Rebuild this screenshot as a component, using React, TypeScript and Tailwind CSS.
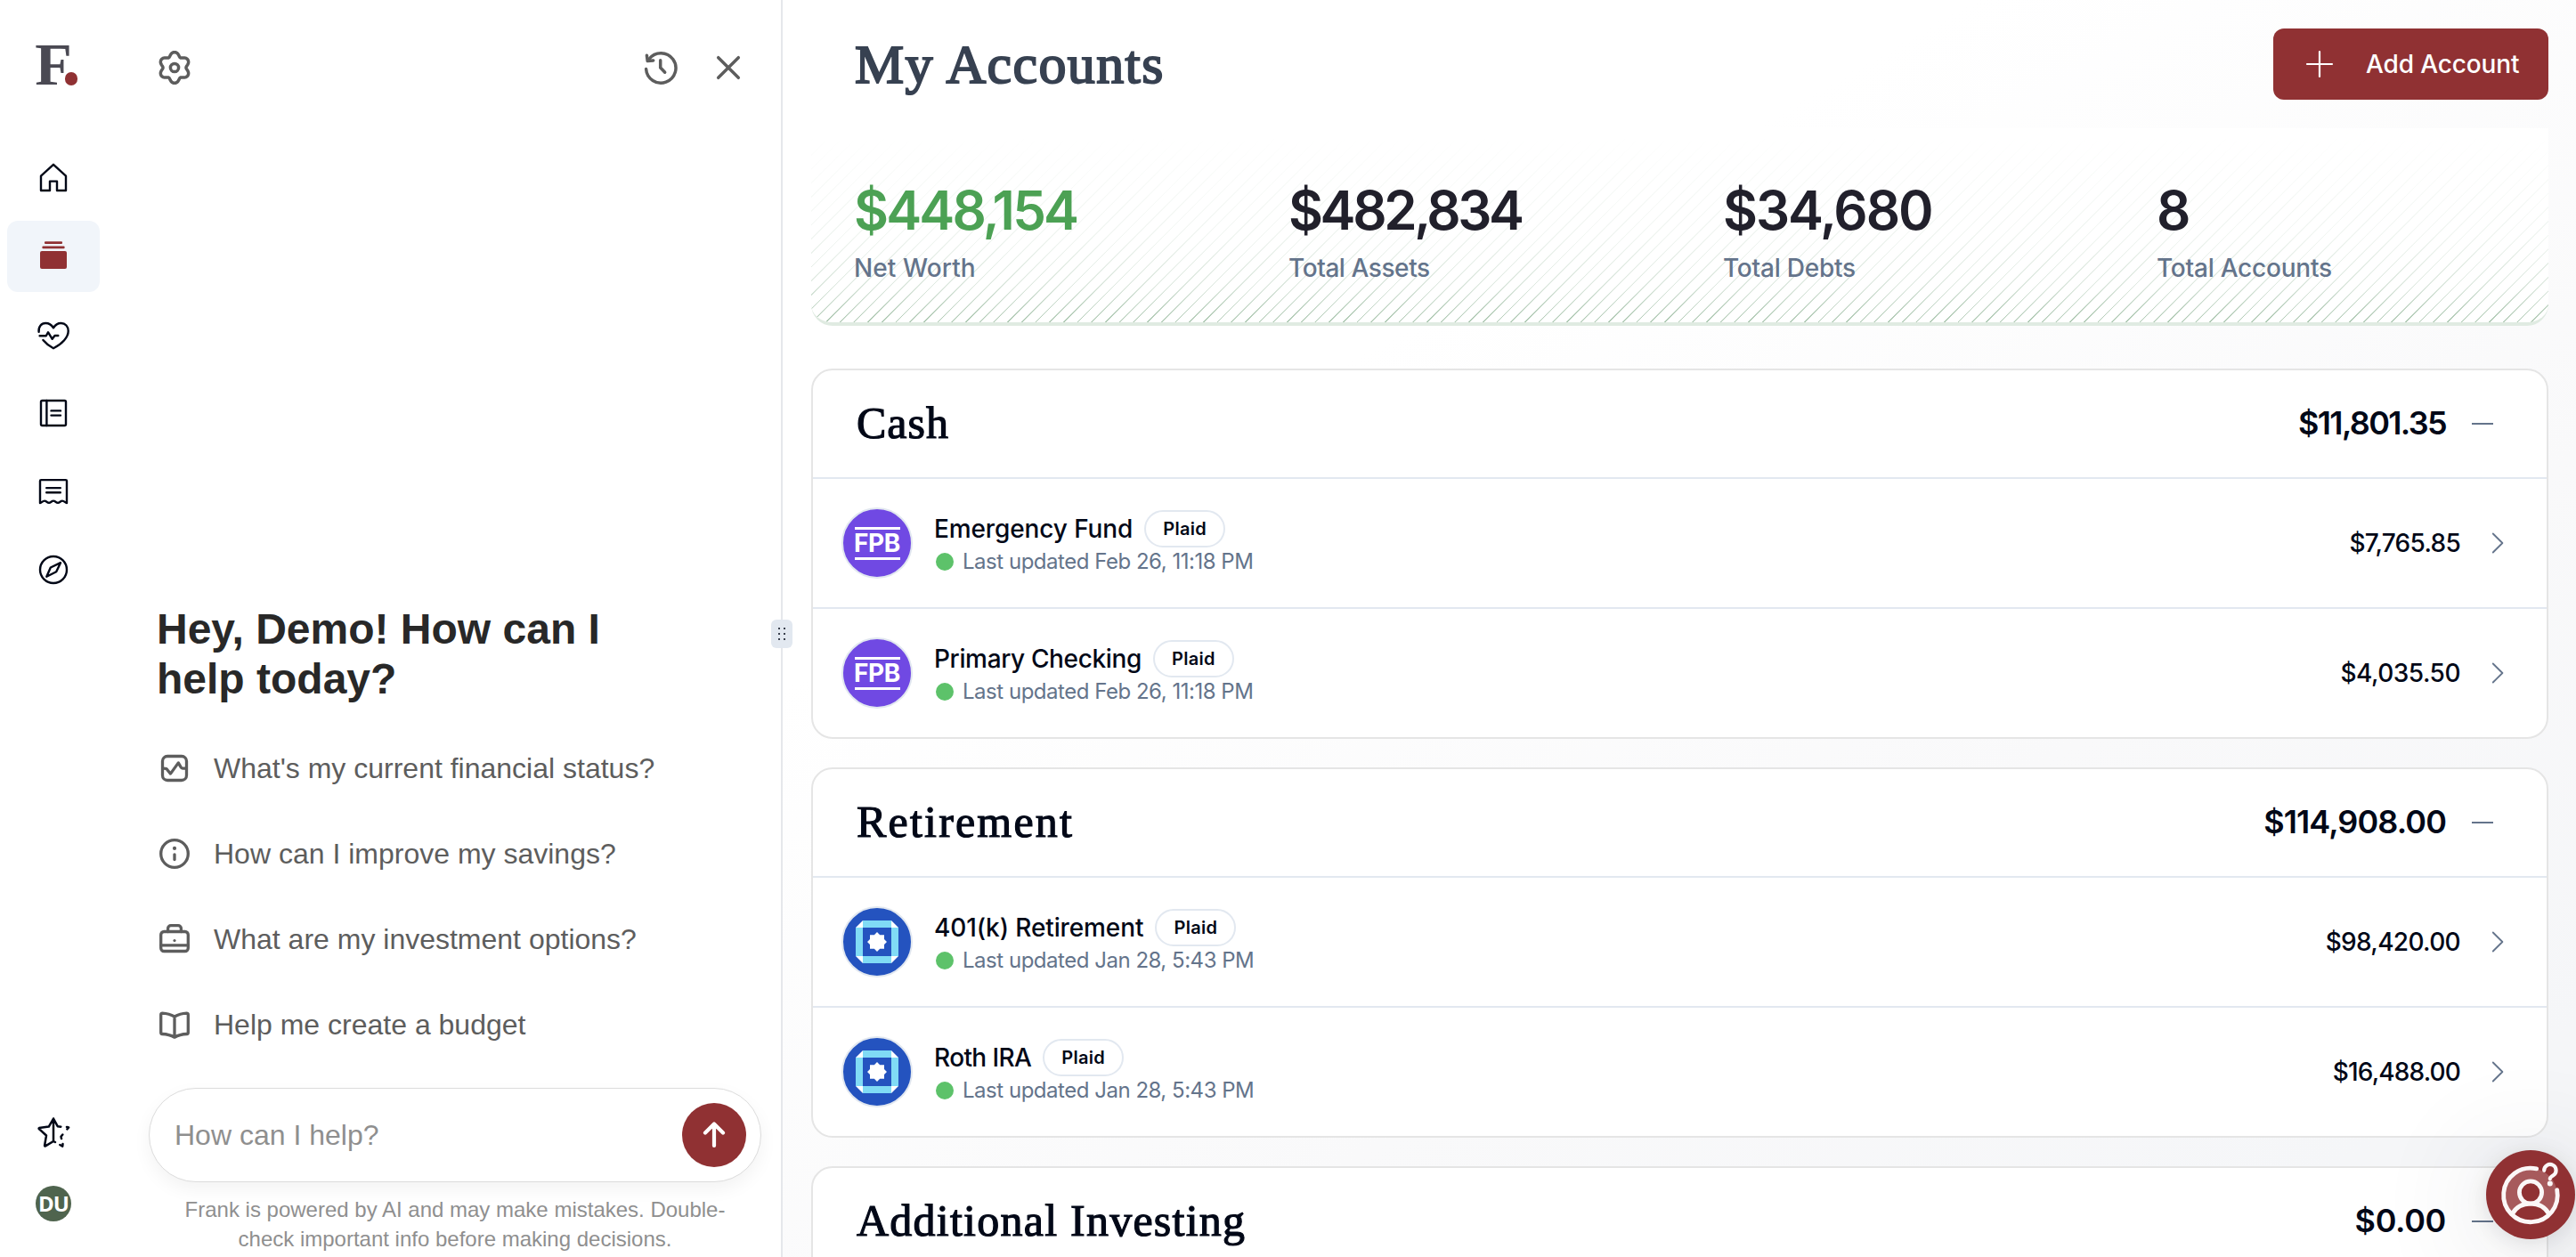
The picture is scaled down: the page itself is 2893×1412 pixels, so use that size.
import type { ReactNode } from 'react';
import clsx from 'clsx';

const stats = [
  { label: 'Net Worth', value: '$448,154', valueClass: 'text-[#4ca154] tracking-[-2.85px]', labelClass: 'tracking-[0.1px]' },
  { label: 'Total Assets', value: '$482,834', valueClass: 'text-[#21202b] tracking-[-3.4px]', labelClass: 'tracking-[-0.43px]' },
  { label: 'Total Debts', value: '$34,680', valueClass: 'text-[#21202b] tracking-[-2.06px]', labelClass: 'tracking-[-0.23px]' },
  { label: 'Total Accounts', value: '8', valueClass: 'text-[#21202b]', labelClass: 'tracking-[-0.23px]' },
];

const groups = [
  {
    title: 'Cash',
    titleClass: 'tracking-[1px]',
    total: '$11,801.35',
    totalClass: 'tracking-[-1.66px]',
    accounts: [
      { name: 'Emergency Fund', nameClass: 'tracking-[-0.12px]', bank: 'fpb', updated: 'Feb 26, 11:18 PM', amount: '$7,765.85', amountClass: 'tracking-[-0.72px]' },
      { name: 'Primary Checking', nameClass: 'tracking-[-0.36px]', bank: 'fpb', updated: 'Feb 26, 11:18 PM', amount: '$4,035.50', amountClass: 'tracking-[-0.49px]' },
    ],
  },
  {
    title: 'Retirement',
    titleClass: 'tracking-[2.2px]',
    total: '$114,908.00',
    totalClass: 'tracking-[-0.9px]',
    accounts: [
      { name: '401(k) Retirement', nameClass: 'tracking-[-0.11px]', bank: 'square', updated: 'Jan 28, 5:43 PM', amount: '$98,420.00', amountClass: 'tracking-[-0.67px]' },
      { name: 'Roth IRA', nameClass: 'tracking-[-0.62px]', bank: 'square', updated: 'Jan 28, 5:43 PM', amount: '$16,488.00', amountClass: 'tracking-[-0.86px]' },
    ],
  },
  {
    title: 'Additional Investing',
    titleClass: 'tracking-[1.24px]',
    total: '$0.00',
    totalClass: 'tracking-[-0.35px]',
    accounts: [],
  },
];

// Six-lobed gear outline
const gearPath =
  Array.from({ length: 120 }, (_, i) => {
    const a = (i / 120) * Math.PI * 2;
    const r = 15.4 + 2.2 * Math.cos(6 * a) - 0.25 * Math.cos(12 * a);
    return `${i ? 'L' : 'M'}${(20 + r * Math.sin(a)).toFixed(2)} ${(20 - r * Math.cos(a)).toFixed(2)}`;
  }).join('') + 'Z';

function Icon({ children, width = 2.4 }: { children: ReactNode; width?: number }) {
  return (
    <svg
      viewBox="0 0 40 40"
      className="size-10 shrink-0"
      fill="none"
      stroke="currentColor"
      strokeWidth={width}
      strokeLinecap="round"
      strokeLinejoin="round"
    >
      {children}
    </svg>
  );
}

const navItems = [
  {
    id: 'home',
    icon: <path d="M20 4.8L6 17.6V34h10V23.6h8V34h10V17.6z" />,
  },
  {
    id: 'accounts',
    active: true,
    icon: (
      <g fill="currentColor" stroke="none">
        <rect x="10" y="3.3" width="20" height="2.6" rx="1" />
        <rect x="7.4" y="8.6" width="25.2" height="2.6" rx="1" />
        <rect x="5" y="14" width="30" height="20" rx="2" />
      </g>
    ),
  },
  {
    id: 'health',
    icon: (
      <>
        <path d="M3.6 16.8C3 11 6.4 7 11.2 7c3.8 0 6.8 2 8.8 5.3C22 9 25 7 28.5 7c4.9 0 8.2 3.8 8.2 8.8 0 7-6.7 14.4-16.7 19.4-4.5-2.3-8.5-5.4-11.6-9.2" />
        <path d="M4.6 21.3h7.2L14 17.2l4.7 7.6 2.8-3.8h3.8" />
      </>
    ),
  },
  {
    id: 'journal',
    icon: (
      <>
        <rect x="6" y="6" width="28" height="28" rx="1.5" />
        <path d="M12.4 6v28M17.5 17.4H28M17.5 22.6H28" />
      </>
    ),
  },
  {
    id: 'transactions',
    icon: (
      <>
        <path d="M5 33V8.3a1.2 1.2 0 0 1 1.2-1.2h27.6A1.2 1.2 0 0 1 35 8.3V33c-1.8-.2-2.8-2.4-5-2.4s-2.8 2.2-5 2.2-2.8-2.2-5-2.2-2.8 2.2-5 2.2-2.8-2.2-5-2.2S6.8 32.8 5 33z" />
        <path d="M12.2 16.1h15.6M12.2 21.2h15.6" />
      </>
    ),
  },
  {
    id: 'explore',
    icon: (
      <>
        <circle cx="20" cy="20" r="15" />
        <path d="M28 12.2l-4.8 10.1-10.9 5.5 4.5-10.3z" />
      </>
    ),
  },
];

const suggestions = [
  {
    text: "What's my current financial status?",
    icon: (
      <>
        <rect x="6.5" y="6.5" width="27" height="27" rx="5.5" />
        <path d="M7.5 20.2c3.5 0 3.6.1 5 2.3l3 3.6 8.8-12.2 2.6 4.4c1.2 1.9 1.6 1.9 5.6 1.9" />
      </>
    ),
  },
  {
    text: 'How can I improve my savings?',
    icon: (
      <>
        <circle cx="20" cy="20" r="15.3" />
        <path d="M20 20.8v5.8" />
        <circle cx="20" cy="13.9" r="2.1" fill="currentColor" stroke="none" />
      </>
    ),
  },
  {
    text: 'What are my investment options?',
    icon: (
      <>
        <rect x="4.7" y="11.5" width="30.6" height="22" rx="3.5" />
        <path d="M4.7 26.8h30.6M12.6 11.5V8a3.3 3.3 0 0 1 3.3-3.3h8.2A3.3 3.3 0 0 1 27.4 8v3.5" />
        <circle cx="20" cy="21.5" r="1.6" fill="currentColor" stroke="none" />
      </>
    ),
  },
  {
    text: 'Help me create a budget',
    icon: (
      <path d="M20 11c-4.2-2.5-8.7-3.7-13.6-3.9A1.6 1.6 0 0 0 4.7 8.7v20.2c0 .9.7 1.5 1.6 1.6 5.2.2 9.7 1.4 13.7 3.7 4-2.3 8.5-3.5 13.7-3.7.9-.1 1.6-.7 1.6-1.6V8.7a1.6 1.6 0 0 0-1.7-1.6C28.7 7.3 24.2 8.5 20 11zv23" />
    ),
  },
];

function NavRail() {
  return (
    <aside className="flex w-[120px] shrink-0 flex-col items-center pb-10">
      <div className="relative flex h-[160px] w-20 justify-center pt-[34px]">
        <span className="font-['Liberation_Serif',serif] text-[68px] leading-[76px] font-bold text-[#4a4953]">F</span>
        <span className="absolute top-[81px] left-[53px] h-[15px] w-[14px] rounded-full bg-[#903133]" />
      </div>
      <nav className="flex flex-col gap-2">
        {navItems.map((item) => (
          <a
            key={item.id}
            className={clsx(
              'flex h-20 w-[104px] items-center justify-center rounded-xl',
              item.active ? 'bg-[#f1f5fa] text-[#903133]' : 'text-[#020817]'
            )}
          >
            <Icon>{item.icon}</Icon>
          </a>
        ))}
      </nav>
      <div className="mt-auto flex flex-col items-center gap-10">
        <span className="text-[#020817]">
          <Icon width={2.5}>
            <path d="M20 30V4.5l-5.2 9.1-10.9 1.5c-.4.1-.4.6-.1.9l8.2 7.5-1.9 11.3c0 .5.4.8.9.6L20 30l2 1M20 4.5l4.7 8.7 3.6.5" />
            <path d="M35 13.9l2.1.5-1.7 2M30.3 22.5l-1.8 2.3.5 2.3M27.3 34l2.9 1.6.3-2.6" />
          </Icon>
        </span>
        <span className="flex size-10 items-center justify-center rounded-full bg-[#4f644e] font-['Open_Sans',sans-serif] text-2xl font-bold tracking-[-1px] text-white">
          DU
        </span>
      </div>
    </aside>
  );
}

function ChatPanel() {
  return (
    <section className="relative flex w-[759px] shrink-0 flex-col border-r-2 border-[#e5e7eb] pb-1 font-['Liberation_Sans',sans-serif]">
      <div className="flex h-[152px] items-center pr-[39px] pl-14 text-[#5d5d5d]">
        <Icon width={3.5}>
          <path d={gearPath} />
          <circle cx="20" cy="20" r="4.6" />
        </Icon>
        <div className="ml-auto flex gap-9">
          <Icon width={3.5}>
            <path d="M3.6 21.5A16.7 16.7 0 1 0 7 10.3" />
            <path d="M4.4 6.3l.8 6.3 6.5-.7" />
            <path d="M19.7 11.8V20l5 5.2" />
          </Icon>
          <Icon width={3.5}>
            <path d="M8.7 8.7l22.6 22.6M31.3 8.7L8.7 31.3" />
          </Icon>
        </div>
      </div>

      <h2 className="mt-auto mb-6 ml-14 text-5xl leading-[56px] font-bold text-[#282828]">
        Hey, Demo! How can I
        <br />
        help today?
      </h2>
      <ul className="ml-14 text-[32px] text-[#5d5d5d]">
        {suggestions.map((s) => (
          <li key={s.text} className="flex h-24 items-center gap-6">
            <Icon width={3.3}>{s.icon}</Icon>
            {s.text}
          </li>
        ))}
      </ul>

      <div className="mt-[23px] mr-[22px] ml-[47px] flex h-[106px] items-center justify-between rounded-full border border-[#dcdcdc] bg-white pr-4 pl-7 shadow-[0_8px_20px_rgba(0,0,0,0.05)]">
        <span className="text-[32px] text-[#8f8f8f]">How can I help?</span>
        <button className="flex size-[72px] items-center justify-center rounded-full bg-[#903133] text-white">
          <Icon width={4.2}>
            <path d="M20 32V8M10 17.5l10-10 10 10" />
          </Icon>
        </button>
      </div>
      <p className="mt-3.5 mr-[22px] ml-[47px] text-center text-2xl leading-[33px] text-[#8f8f8f]">
        Frank is powered by AI and may make mistakes. Double-
        <br />
        check important info before making decisions.
      </p>

      <div className="absolute top-[696px] -right-[13px] z-10 grid h-8 w-6 grid-cols-[2px_2px] place-content-center gap-1 rounded-md bg-[#e2e8f0]">
        {[0, 1, 2, 3, 4, 5].map((n) => (
          <span key={n} className="size-0.5 rounded-full bg-[#020817]" />
        ))}
      </div>
    </section>
  );
}

function BankLogo({ bank }: { bank: string }) {
  if (bank === 'fpb') {
    return (
      <div className="flex size-20 shrink-0 flex-col items-center justify-center rounded-full border-2 border-[#e2e8f0] bg-[#7049e3] text-white">
        <span className="h-[3px] w-[51px] bg-white" />
        <span className="flex h-[31px] items-center font-['Inter',sans-serif] text-[28px] font-bold tracking-[-0.3px]">FPB</span>
        <span className="h-[3px] w-[51px] bg-white" />
      </div>
    );
  }
  return (
    <svg viewBox="0 0 80 80" className="size-20 shrink-0">
      <circle cx="40" cy="40" r="39" fill="#2453bf" stroke="#e2e8f0" strokeWidth="2" />
      <path d="M24 20h32M24 60h32M20 24v32M60 24v32" stroke="#80dbf5" strokeWidth="8" />
      <g fill="#fff">
        <path d="M16 24l8-8v8zM64 24l-8-8v8zM16 56l8 8v-8zM64 56l-8 8v-8z" />
        <path d="M40 29l3.2 3.2H48V37l3 3-3 3v4.8h-4.8L40 51l-3.2-3.2H32V43l-3-3 3-3v-4.8h4.8z" />
      </g>
    </svg>
  );
}

function AccountRow({ account }: { account: (typeof groups)[number]['accounts'][number] }) {
  return (
    <div className="flex h-[146px] items-center border-t-2 border-[#e2e8f0] pr-12 pl-8">
      <BankLogo bank={account.bank} />
      <div className="ml-6">
        <div className="flex h-[42px] items-center gap-[13px]">
          <span className={clsx('pb-px text-[28px] leading-[40px] font-medium', account.nameClass)}>{account.name}</span>
          <span className="flex h-[42px] w-[91px] items-center justify-center rounded-full border-2 border-[#e2e8f0] bg-white text-xl font-semibold tracking-[0.29px]">
            Plaid
          </span>
        </div>
        <div className="flex h-8 items-center gap-2.5 pl-0.5">
          <span className="size-5 rounded-full bg-[#5dc26a]" />
          <span className="text-2xl tracking-[-0.48px] text-[#64748b]">Last updated {account.updated}</span>
        </div>
      </div>
      <span className={clsx('mr-[35px] ml-auto pb-px text-[28px] font-medium', account.amountClass)}>{account.amount}</span>
      <svg viewBox="0 0 14 24" className="h-6 w-3.5" fill="none" stroke="#64748b" strokeWidth="1.8" strokeLinecap="round" strokeLinejoin="round">
        <path d="M1.8 1.5L12.4 12 1.8 22.5" />
      </svg>
    </div>
  );
}

function AccountGroup({ group }: { group: (typeof groups)[number] }) {
  return (
    <section className="shrink-0 rounded-3xl border-2 border-[#e5e5e5] bg-white text-[#020817]">
      <div className="flex h-[120px] items-center justify-between pr-[60px] pb-0.5 pl-[49px]">
        <h2
          className={clsx(
            "font-['Liberation_Serif',serif] text-[50px] leading-[60px] [-webkit-text-stroke:1.2px_#020817]",
            group.titleClass
          )}
        >
          {group.title}
        </h2>
        <div className="flex items-center gap-[29px]">
          <span className={clsx('text-4xl font-semibold', group.totalClass)}>{group.total}</span>
          <span className="mt-px h-0.5 w-6 bg-[#64748b]" />
        </div>
      </div>
      {group.accounts.map((account) => (
        <AccountRow key={account.name} account={account} />
      ))}
    </section>
  );
}

function Summary() {
  return (
    <div className="relative h-[222px] shrink-0 overflow-hidden rounded-b-3xl border-b-4 border-[#e0ebe2] bg-white">
      <div className="absolute inset-x-0 top-0 -bottom-1 bg-[repeating-linear-gradient(135deg,transparent_0px,transparent_9.7px,#a9c5ae_10px,#a9c5ae_10.9px,transparent_11.1px)] [mask-image:linear-gradient(to_bottom,transparent_5%,rgba(0,0,0,0.16)_55%,rgba(0,0,0,0.4)_80%,black)]" />
      <div className="relative grid grid-cols-[488px_488px_487px_400px] pt-14 pl-12">
        {stats.map((stat) => (
          <div key={stat.label}>
            <p className={clsx('text-[60px] leading-[72px] font-semibold', stat.valueClass)}>{stat.value}</p>
            <p className={clsx('mt-[9px] text-[28px] leading-[40px] font-medium text-[#64748b]', stat.labelClass)}>{stat.label}</p>
          </div>
        ))}
      </div>
    </div>
  );
}

function HelpBubble() {
  return (
    <button className="absolute right-px bottom-5 z-20 size-[100px] rounded-full bg-[#903133] shadow-[0_12px_120px_10px_rgba(60,65,75,0.13),0_4px_24px_rgba(0,0,0,0.1)]">
      <svg viewBox="0 0 100 100" className="size-full" fill="none" stroke="#fbf7f7" strokeWidth="4.8" strokeLinecap="round">
        <circle cx="50" cy="50.5" r="30" fill="#a75a5c" stroke="none" />
        <path d="M29.5 71.5C34 63.5 41 60 50 60s16 3.5 20.5 11.5C65 77.5 58.5 80.5 50 80.5S35 77.5 29.5 71.5z" fill="#903133" stroke="none" />
        <path d="M56.6 20.9A30.3 30.3 0 1 0 79.7 44.8" />
        <circle cx="50" cy="47.5" r="12.6" fill="#903133" />
        <path d="M29.5 71.5C34 63.5 41 60 50 60s16 3.5 20.5 11.5" />
        <path d="M65.2 22.8a6.7 6.7 0 1 1 10.3 5.5c-2.3 1.5-3.6 2.1-3.7 3.9" strokeWidth="4.2" />
        <circle cx="71.8" cy="37.6" r="3" fill="#fbf7f7" stroke="none" />
      </svg>
    </button>
  );
}

function App() {
  return (
    <div className="relative flex h-[1412px] w-full overflow-hidden bg-white">
      <NavRail />
      <ChatPanel />
      <main className="flex min-w-0 flex-1 flex-col overflow-hidden bg-[linear-gradient(150deg,#fff_0%,#fff_30%,#f9f9fa_65%,#f5f6f8_90%)] pr-[31px] pl-8 font-['Inter',sans-serif]">
        <header className="flex h-36 shrink-0 items-center justify-between pl-[49px]">
          <h1 className="font-['Liberation_Serif',serif] text-[62px] leading-[80px] tracking-[1.4px] text-[#374151] [-webkit-text-stroke:2px_#374151]">
            My Accounts
          </h1>
          <button className="flex h-20 w-[309px] items-center rounded-xl bg-[#903133] pl-9 text-[28px] font-medium tracking-[-0.13px] text-white">
            <svg viewBox="0 0 32 32" className="mr-9 size-8" fill="none" stroke="currentColor" strokeWidth="2.2" strokeLinecap="round">
              <path d="M16 2v28M2 16h28" />
            </svg>
            Add Account
          </button>
        </header>
        <Summary />
        <div className="mt-12 flex flex-col gap-8">
          {groups.map((group) => (
            <AccountGroup key={group.title} group={group} />
          ))}
        </div>
      </main>
      <HelpBubble />
    </div>
  );
}

export default App;
